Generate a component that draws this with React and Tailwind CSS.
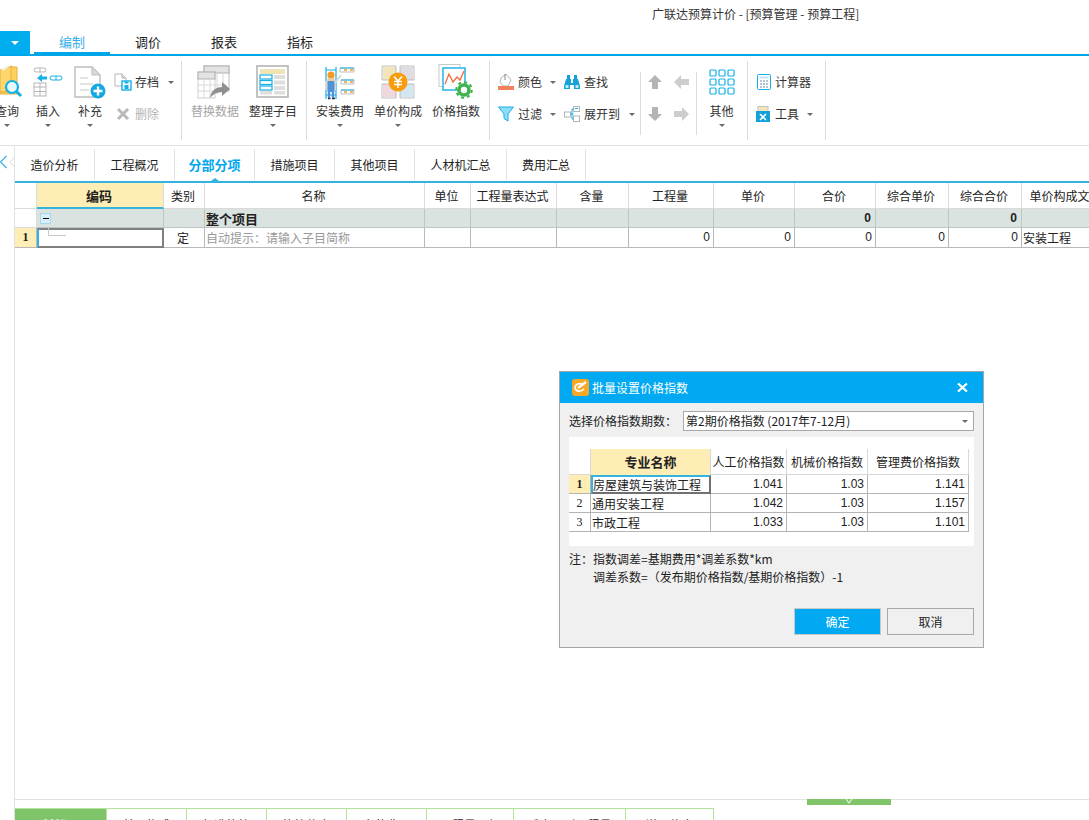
const Caret = ({ className = "" }) => (
  <span className={"inline-block w-0 h-0 border-x-[3px] border-x-transparent border-t-[3px] border-t-[#6b6b6b] " + className} />
);

const QueryIcon = () => (
  <svg width="36" height="36" viewBox="0 0 36 36">
    <path d="M0 6 L12 2 L12 28 L0 28Z" fill="#ffd56e" stroke="#e3b23e" />
    <path d="M11 3 L17 3 L17 30 L0 30 L0 28 L11 28Z" fill="#ffcf5c" stroke="#e3b23e" />
    <path d="M2 6 L10 1" stroke="#f3f3f3" strokeWidth="2" />
    <circle cx="12" cy="23" r="6" fill="#e6f7fd" stroke="#14b0e6" strokeWidth="2.2" />
    <path d="M16.5 27.5 L21 32" stroke="#14b0e6" strokeWidth="3" />
  </svg>
);

const InsertIcon = () => (
  <svg width="36" height="36" viewBox="-3 -2 36 36">
    <rect x="1" y="2" width="12" height="4" rx="2" fill="#fff" stroke="#b5b5b5" />
    <path d="M7 2 V6" stroke="#b5b5b5" />
    <path d="M4 12 L9 8 V10.5 H14 V13.5 H9 V16 L4 12Z" fill="#14b0e6" />
    <rect x="17" y="10" width="12" height="4" rx="2" fill="#fff" stroke="#14b0e6" />
    <path d="M23 10 V14" stroke="#14b0e6" />
    <rect x="1" y="17" width="12" height="13" fill="#fff" stroke="#b5b5b5" />
    <path d="M1 21 H13 M1 25.5 H13 M7 17 V30" stroke="#b5b5b5" />
  </svg>
);

const AddDocIcon = () => (
  <svg width="36" height="36" viewBox="-1 -2 36 36">
    <path d="M2 1 H19 L27 9 V31 H2Z" fill="#fff" stroke="#bdbdbd" strokeWidth="1.4" />
    <path d="M19 1 V9 H27Z" fill="#d9d9d9" stroke="#bdbdbd" />
    <path d="M7 12 H15 M7 18 H20 M7 24 H16" stroke="#e2e2e2" strokeWidth="2" />
    <circle cx="25" cy="25" r="7.5" fill="#14a9e3" />
    <path d="M25 20.5 V29.5 M20.5 25 H29.5" stroke="#fff" strokeWidth="2.4" />
  </svg>
);

const ArchiveIcon = () => (
  <svg width="18" height="18" viewBox="0 0 18 18">
    <path d="M1 1 H8 L12 5 V13 H1Z" fill="#fff" stroke="#b5b5b5" />
    <path d="M8 1 V5 H12" fill="#ddd" stroke="#b5b5b5" />
    <rect x="8" y="8" width="9" height="9" fill="#fff" stroke="#14b0e6" strokeWidth="1.4" />
    <rect x="10.5" y="12" width="4" height="4" fill="#14b0e6" />
    <rect x="10.5" y="8.5" width="4" height="2" fill="#14b0e6" />
  </svg>
);

const DeleteIcon = () => (
  <svg width="14" height="14" viewBox="0 0 14 14">
    <path d="M2 2 L12 12 M12 2 L2 12" stroke="#b9b9b9" strokeWidth="3" />
  </svg>
);

const ReplaceIcon = () => (
  <svg width="36" height="36" viewBox="0 0 36 36">
    <rect x="7" y="2" width="25" height="25" fill="#fff" stroke="#bdbdbd" />
    <rect x="7" y="2" width="25" height="7" fill="#e3e3e3" stroke="#b0b0b0" />
    <rect x="1" y="8" width="17" height="26" fill="#fff" stroke="#cfcfcf" />
    <rect x="1" y="8" width="17" height="7" fill="#e3e3e3" stroke="#b0b0b0" />
    <path d="M1 21 H30 M1 27 H22 M7 15 V34 M13 15 V34 M20 9 V30 M26 9 V24" stroke="#d8d8d8" />
    <path d="M13 34 C14 26 20 23 25 23 V18 L33 25 L25 32 V28 C20 28 16 30 13 34Z" fill="#8f8f8f" />
  </svg>
);

const ArrangeIcon = () => (
  <svg width="36" height="36" viewBox="0 0 36 36">
    <rect x="2" y="2" width="31" height="31" fill="#fff" stroke="#b5b5b5" strokeWidth="1.6" />
    <rect x="5" y="5" width="25" height="5" fill="#f0e3b4" />
    <rect x="5" y="11" width="12" height="4" fill="#fff" stroke="#14b0e6" strokeWidth="1.2" />
    <rect x="5" y="16.5" width="12" height="4" fill="#fff" stroke="#14b0e6" strokeWidth="1.2" />
    <rect x="5" y="22" width="12" height="4" fill="#fff" stroke="#14b0e6" strokeWidth="1.2" />
    <rect x="5" y="27" width="12" height="3.5" fill="#dedede" />
    <path d="M19 11 H30 V15 H19Z M19 16.5 H30 V20.5 H19Z M19 22 H30 V26 H19Z M19 27 H30 V30.5 H19Z" fill="#dedede" />
  </svg>
);

const WorkerIcon = () => (
  <svg width="36" height="36" viewBox="-2 -2 36 36">
    <path d="M2 1 V33 M12 1 V33 M2 4 H12 M2 22 H12 M2 29 H12" stroke="#14b0e6" strokeWidth="1.2" />
    <path d="M16 2 H30 V6 H16Z M17 14 H30 V18 H17Z M17 24 H30 V28 H17Z" fill="#fff" stroke="#bdbdbd" />
    <path d="M16 2 H30 M17 14 H30 M17 24 H30" stroke="#14b0e6" />
    <path d="M20 4 H23 M26 4 H29 M20 16 H23 M26 16 H29 M20 26 H23 M26 26 H29" stroke="#f59b23" strokeWidth="1.3" />
    <circle cx="7" cy="9" r="3.6" fill="#f59b23" />
    <rect x="3.5" y="12" width="7" height="3" fill="#f0c9a0" />
    <rect x="1" y="15" width="11" height="9" fill="#d9d9d9" />
    <rect x="3.5" y="15" width="7" height="11" fill="#4f93d6" />
    <path d="M5 26 V32 M9 26 V32" stroke="#4f93d6" strokeWidth="2.4" />
    <path d="M4 32.5 H6.5 M8 32.5 H11" stroke="#333" strokeWidth="1.4" />
    <path d="M11 17 L17 9" stroke="#d9d9d9" strokeWidth="2" />
  </svg>
);

const UnitPriceIcon = () => (
  <svg width="36" height="36" viewBox="0 0 36 36">
    <rect x="3" y="3" width="13" height="13" fill="#f3e5bb" stroke="none" />
    <rect x="20" y="3" width="13" height="13" fill="#e0dce4" />
    <rect x="3" y="20" width="13" height="13" fill="#f1d8dc" />
    <rect x="20" y="20" width="13" height="13" fill="#d3e6f2" />
    <path d="M2 2 H16 V16 H2Z M20 2 H34 V16 H20Z M2 20 H16 V34 H2Z M20 20 H34 V34 H20Z" fill="none" stroke="#bdbdbd" />
    <circle cx="18" cy="18" r="9.5" fill="#f79d0c" />
    <path d="M14 12.5 L18 17 L22 12.5 M18 17 V24 M14 17.5 H22 M14 20.5 H22" fill="none" stroke="#fff" strokeWidth="1.5" />
  </svg>
);

const PriceIndexIcon = () => (
  <svg width="36" height="36" viewBox="0 0 36 36">
    <rect x="1" y="0.5" width="21" height="22" fill="#fff" stroke="#c9c9c9" />
    <rect x="5" y="4" width="22" height="22" fill="#fff" stroke="#14b0e6" strokeWidth="1.4" />
    <path d="M7 20 L11 10 L15 18 L19 13 L22 16 L26 7" fill="none" stroke="#f2693b" strokeWidth="1.3" />
    <circle cx="26" cy="26" r="5" fill="#fff" stroke="#3fb34f" strokeWidth="3.6" />
    <circle cx="26" cy="26" r="7.8" fill="none" stroke="#3fb34f" strokeWidth="2" strokeDasharray="3 3.1" />
  </svg>
);

const BucketIcon = () => (
  <svg width="16" height="18" viewBox="0 0 16 18">
    <path d="M3 5 L8 1 L13 7 L10 13 H5 L2 9Z" fill="#fff" stroke="#b5b5b5" />
    <path d="M7 1 L7 7" stroke="#888" />
    <rect x="0" y="13" width="16" height="4" fill="#f2825c" />
  </svg>
);

const FunnelIcon = () => (
  <svg width="16" height="16" viewBox="0 0 16 16">
    <path d="M0.5 1 H15.5 L10 8 V15 L6 12.5 V8Z" fill="#8fdcf7" stroke="#14b0e6" />
  </svg>
);

const BinocularIcon = () => (
  <svg width="16" height="16" viewBox="0 0 16 16">
    <path d="M3 1 H6 V5 H3Z M10 1 H13 V5 H10Z" fill="#14a0d8" />
    <path d="M2 5 H7 V9 H9 V5 H14 L16 12 V15 H10 V11 H6 V15 H0 V12Z" fill="#14a0d8" />
    <rect x="1.5" y="11" width="3" height="3" fill="#bfeafa" />
    <rect x="11.5" y="11" width="3" height="3" fill="#bfeafa" />
  </svg>
);

const ExpandIcon = () => (
  <svg width="16" height="16" viewBox="0 0 16 16">
    <rect x="0.5" y="6" width="6" height="5" fill="#fff" stroke="#b5b5b5" />
    <rect x="9.5" y="0.5" width="6" height="5" fill="#fff" stroke="#b5b5b5" />
    <rect x="9.5" y="10" width="6" height="5.5" fill="#fff" stroke="#b5b5b5" />
    <path d="M6.5 8 H9.5 M8 3 V13 M8 3 H9.5 M8 13 H9.5" stroke="#14b0e6" />
    <rect x="11" y="2" width="3" height="1" fill="#14b0e6" />
  </svg>
);

const GridIcon = () => (
  <svg width="26" height="26" viewBox="0 0 26 26">
    {[1, 10, 19].map((y) =>
      [1, 10, 19].map((x) => (
        <rect key={x + "-" + y} x={x} y={y} width="6" height="6" rx="1" fill="#fff" stroke="#14b0e6" strokeWidth="1.2" />
      ))
    )}
  </svg>
);

const CalcIcon = () => (
  <svg width="14" height="16" viewBox="0 0 14 16">
    <rect x="0.5" y="0.5" width="13" height="15" rx="1" fill="#fff" stroke="#14b0e6" />
    <rect x="2.5" y="2.5" width="9" height="2" fill="#bfe7f7" />
    <path d="M3 7 H5 M6 7 H8 M9 7 H11 M3 10 H5 M6 10 H8 M9 10 H11 M3 13 H5 M6 13 H8 M9 13 H11" stroke="#6b8fa3" />
  </svg>
);

const ToolIcon = () => (
  <svg width="16" height="16" viewBox="0 0 16 16">
    <rect x="2" y="0.5" width="10" height="6" fill="#f3e5bb" stroke="#c4c4c4" />
    <rect x="0" y="5" width="14" height="11" fill="#14a0d8" />
    <path d="M4 8 L10 14 M10 8 L4 14" stroke="#fff" strokeWidth="1.6" />
  </svg>
);

const Arrow = ({ dir, color }) => {
  const paths = {
    up: "M7 0 L14 7 H10 V14 H4 V7 H0Z",
    down: "M7 14 L14 7 H10 V0 H4 V7 H0Z",
    left: "M0 7 L7 0 V4 H15 V10 H7 V14Z",
    right: "M15 7 L8 0 V4 H0 V10 H8 V14Z",
  };
  return (
    <svg width="15" height="14" viewBox="0 0 15 14">
      <path d={paths[dir]} fill={color} />
    </svg>
  );
};

const BigBtn = ({ w, label, icon, caret, gray }) => (
  <div className={"flex flex-col items-center shrink-0 pt-[8px] " + w}>
    <div className="h-[36px] flex items-start justify-center">{icon}</div>
    <div className={"mt-[1px] h-[20px] leading-[20px] whitespace-nowrap " + (gray ? "text-[#a5a5a5]" : "text-[#333]")}>{label}</div>
    {caret && <Caret className="mt-[3px]" />}
  </div>
);

const SmallBtn = ({ icon, label, caret, gray, gap = "gap-[3px]", caretGap = "ml-[5px]" }) => (
  <div className={"flex items-center h-[20px] whitespace-nowrap " + gap}>
    <div className="w-[18px] flex justify-center">{icon}</div>
    <span className={gray ? "text-[#b3b3b3]" : "text-[#333]"}>{label}</span>
    {caret && <Caret className={caretGap} />}
  </div>
);

const Sep = () => <div className="w-px h-[79px] mt-[5px] bg-[#dcdcdc] shrink-0" />;
const ShortSep = () => <div className="w-px h-[63px] mt-[16px] bg-[#dcdcdc] shrink-0" />;

const SmallCol = ({ w, children }) => (
  <div className={"flex flex-col gap-[12px] pt-[16px] shrink-0 " + w}>{children}</div>
);

const Toolbar = () => (
  <div className="flex h-[90px] border-b border-[#e2e2e2] text-[12px]">
    <div className="-ml-[16px]"><BigBtn w="w-[46px]" label="查询" caret icon={<div className="pl-[22px]"><QueryIcon /></div>} /></div>
    <BigBtn w="w-[36px]" label="插入" caret icon={<InsertIcon />} />
    <BigBtn w="w-[48px]" label="补充" caret icon={<AddDocIcon />} />
    <SmallCol w="w-[67px]">
      <SmallBtn icon={<ArchiveIcon />} label="存档" caret caretGap="ml-[6px]" />
      <SmallBtn icon={<DeleteIcon />} label="删除" gray />
    </SmallCol>
    <Sep />
    <BigBtn w="w-[66px]" label="替换数据" gray icon={<ReplaceIcon />} />
    <BigBtn w="w-[50px]" label="整理子目" caret icon={<ArrangeIcon />} />
    <div className="w-[8px] shrink-0" />
    <Sep />
    <BigBtn w="w-[66px]" label="安装费用" caret icon={<WorkerIcon />} />
    <BigBtn w="w-[50px]" label="单价构成" caret icon={<UnitPriceIcon />} />
    <BigBtn w="w-[66px]" label="价格指数" icon={<PriceIndexIcon />} />
    <Sep />
    <div className="w-[7px] shrink-0" />
    <SmallCol w="w-[66px]">
      <SmallBtn icon={<BucketIcon />} label="颜色" caret />
      <SmallBtn icon={<FunnelIcon />} label="过滤" caret />
    </SmallCol>
    <SmallCol w="w-[77px]">
      <SmallBtn icon={<BinocularIcon />} label="查找" />
      <SmallBtn icon={<ExpandIcon />} label="展开到" caret caretGap="ml-[6px]" />
    </SmallCol>
    <ShortSep />
    <div className="w-[55px] shrink-0 pt-[19px] pl-[7px] grid grid-cols-[26px_15px] gap-y-[18px] h-fit">
      <Arrow dir="up" color="#b4b4b4" />
      <Arrow dir="left" color="#cdcdcd" />
      <Arrow dir="down" color="#b4b4b4" />
      <Arrow dir="right" color="#cdcdcd" />
    </div>
    <ShortSep />
    <BigBtn w="w-[49px]" label="其他" caret icon={<div className="pt-[5px]"><GridIcon /></div>} />
    <div className="w-px shrink-0" />
    <Sep />
    <div className="w-[7px] shrink-0" />
    <SmallCol w="w-[70px]">
      <SmallBtn icon={<CalcIcon />} label="计算器" gap="gap-[2px]" />
      <SmallBtn icon={<ToolIcon />} label="工具" caret gap="gap-[2px]" caretGap="ml-[6px]" />
    </SmallCol>
    <Sep />
  </div>
);

const mainCols = ["", "编码", "类别", "名称", "单位", "工程量表达式", "含量", "工程量", "单价", "合价", "综合单价", "综合合价", "单价构成文件"];
const topRow = ["", "", "", "整个项目", "", "", "", "", "", "0", "", "0", ""];
const subRow = ["1", "", "定", "自动提示：请输入子目简称", "", "", "", "0", "0", "0", "0", "0", "安装工程"];
const numCols = [7, 8, 9, 10, 11];

const MainTable = () => (
  <div className="overflow-hidden text-[12px] text-[#222]">
    <div className="grid grid-cols-[22px_127px_41px_220px_46px_86px_72px_85px_81px_81px_73px_73px_90px] w-[1097px]">
      {mainCols.map((c, i) => (
        <div
          key={i}
          className={
            "h-[26px] leading-[25px] text-center pr-[2px] whitespace-nowrap overflow-hidden border-r border-[#dadada] " +
            (i === 1 ? "bg-[#feedb5] font-bold text-[13px] border-b-2 border-b-[#35b3df]" : "border-b border-b-[#dadada]")
          }
        >
          {c}
        </div>
      ))}
      {topRow.map((c, i) => (
        <div
          key={i}
          className={
            "h-[19px] leading-[19px] font-bold relative border-r border-b " +
            (i === 0 ? "bg-white border-[#dadada] " : "bg-[#dae3df] border-[#bdc7c2] ") +
            (numCols.includes(i) ? "text-right pr-[4px] font-['Liberation_Sans',sans-serif]" : "pl-[1px] text-[13px]")
          }
        >
          {c}
          {i === 1 && (
            <span className="absolute left-[3px] top-[4px] w-[11px] h-[11px] bg-[#d7eef8] border border-[#a9d8ea] flex items-center justify-center">
              <span className="w-[6px] h-px bg-black" />
            </span>
          )}
        </div>
      ))}
      {subRow.map((c, i) => (
        <div
          key={i}
          className={
            "h-[20px] leading-[19px] whitespace-nowrap relative " +
            (i === 1 ? "border-2 border-[#808080] border-l-[#35b3df] " : "border-r border-b border-[#b8b8b8] ") +
            (i === 0 ? "bg-[#feedb5] text-center font-bold font-['Liberation_Serif',serif] " : "") +
            (i === 2 ? "text-center pr-[2px] " : "") +
            (i === 3 ? "text-[#999] pl-[1px] " : "") +
            (numCols.includes(i) ? "text-right pr-[3px] font-['Liberation_Sans',sans-serif] " : "") +
            (i === 12 ? "pl-[1px] " : "")
          }
        >
          {c}
          {i === 1 && <span className="absolute left-[9px] top-[-3px] w-[18px] h-[9px] border-l border-b border-[#c8c8c8]" />}
        </div>
      ))}
    </div>
  </div>
);

const priceRows = [
  ["1", "房屋建筑与装饰工程", "1.041", "1.03", "1.141"],
  ["2", "通用安装工程", "1.042", "1.03", "1.157"],
  ["3", "市政工程", "1.033", "1.03", "1.101"],
];

const Dialog = () => (
  <div className="absolute left-[559px] top-[371px] w-[425px] h-[277px] bg-[#f0f0f0] border border-[#a6a6a6] text-[12px] text-[#222] flex flex-col">
    <div className="h-[31px] shrink-0 bg-[#00a9f1] text-white text-[12px] flex items-center pl-[12px] pr-[15px]">
      <svg width="17" height="17" viewBox="0 0 17 17" className="mr-[3px]">
        <rect width="17" height="17" rx="3" fill="#f9a825" />
        <path d="M3 9 C3 5 7 4 10 5 M3 9 C4 13 9 13 12 10" fill="none" stroke="#fff" strokeWidth="1.6" />
        <path d="M6 9 L14 3" stroke="#fff" strokeWidth="2.2" />
      </svg>
      <span>批量设置价格指数</span>
      <svg width="11" height="9" viewBox="0 0 11 9" className="ml-auto">
        <path d="M1 0.5 L10 8.5 M10 0.5 L1 8.5" stroke="#fff" strokeWidth="2.2" />
      </svg>
    </div>
    <div className="flex items-center h-[20px] mt-[8px] mx-[9px]">
      <span className="w-[114px] shrink-0 whitespace-nowrap">选择价格指数期数：</span>
      <div className="flex-1 h-[20px] bg-white border border-[#a8a8a8] flex items-center pl-[2px] pr-[5px]">
        <span>第2期价格指数 (2017年7-12月)</span>
        <Caret className="ml-auto" />
      </div>
    </div>
    <div className="h-[109px] mx-[9px] mt-[6px] bg-white pt-[12px]">
      <div className="grid grid-cols-[22px_120px_76px_81px_101px] w-[400px]">
        <div className="h-[26px] border-r border-b border-[#d8d8d8]" />
        <div className="h-[26px] leading-[26px] text-center bg-[#feedb5] font-bold text-[13px] border-r border-[#d8d8d8]">专业名称</div>
        {["人工价格指数", "机械价格指数", "管理费价格指数"].map((h) => (
          <div key={h} className="h-[26px] leading-[26px] text-center whitespace-nowrap border-r border-b border-[#d8d8d8]">{h}</div>
        ))}
        {priceRows.map((r, i) =>
          r.map((c, j) => (
            <div
              key={i + "-" + j}
              className={
                "h-[19px] whitespace-nowrap " +
                (j === 1 && i === 0
                  ? "border-2 border-[#707070] border-l-[#35b3df] border-t-[#35b3df] leading-[16px] "
                  : "border-r border-b border-[#b4b4b4] leading-[19px] ") +
                (j === 0 ? "text-center font-['Liberation_Serif',serif] " : "") +
                (j === 0 && i === 0 ? "bg-[#feedb5] font-bold " : "") +
                (j === 1 && i !== 0 ? "pl-[1px] " : "") +
                (j > 1 ? "text-right pr-[3px] font-['Liberation_Sans',sans-serif] " : "")
              }
            >
              {c}
            </div>
          ))
        )}
      </div>
    </div>
    <div className="mx-[9px] mt-[4px] leading-[18px]">
      <div className="flex">
        <span className="w-[24px] shrink-0">注：</span>
        <span>指数调差=基期费用*调差系数*km</span>
      </div>
      <div className="pl-[24px]">调差系数=（发布期价格指数/基期价格指数）-1</div>
    </div>
    <div className="flex justify-end gap-[6px] mx-[9px] mt-auto mb-[12px]">
      <div className="w-[87px] h-[27px] leading-[25px] text-center bg-[#00a9f1] border border-[#c8c8c8] text-white">确定</div>
      <div className="w-[87px] h-[27px] leading-[25px] text-center border border-[#a8a8a8]">取消</div>
    </div>
  </div>
);

const sheetTabs = ["造价分析", "工程概况", "分部分项", "措施项目", "其他项目", "人材机汇总", "费用汇总"];
const sheetWidths = ["w-[80px]", "w-[80px]", "w-[80px]", "w-[80px]", "w-[80px]", "w-[92px]", "w-[79px]"];
const bottomTabs = [
  ["工料机显示", "w-[92px]"],
  ["单价构成", "w-[80px]"],
  ["标准换算", "w-[80px]"],
  ["换算信息", "w-[80px]"],
  ["安装费用", "w-[80px]"],
  ["工程量明细", "w-[87px]"],
  ["反查图形工程量", "w-[112px]"],
  ["说明信息", "w-[88px]"],
];

const App = () => (
  <div className="relative w-[1089px] h-[820px] overflow-hidden bg-white flex flex-col font-['Noto_Sans_CJK_SC',sans-serif] text-[#222]">
    <div className="h-[31px] shrink-0 pl-[652px] pt-[5px] text-[12px] leading-[18px] text-[#333] whitespace-nowrap">
      广联达预算计价 - [预算管理 - 预算工程]
    </div>
    <div className="h-[25px] shrink-0 flex border-b-2 border-[#00a7e8] text-[13px]">
      <div className="w-[30px] h-[23px] bg-[#00aef0] flex items-center justify-center mr-[4px]">
        <span className="w-0 h-0 border-x-[4px] border-x-transparent border-t-[4px] border-t-white" />
      </div>
      {["编制", "调价", "报表", "指标"].map((t, i) => (
        <div
          key={t}
          className={"w-[76px] h-[23px] leading-[21px] text-center " + (i === 0 ? "text-[#37aee6] border-b-2 border-[#00a7e8]" : "text-[#222]")}
        >
          {t}
        </div>
      ))}
    </div>
    <Toolbar />
    <div className="flex flex-1 min-h-0">
      <div className="w-[15px] shrink-0 relative border-r border-[#e2e2e2]">
        <svg width="14" height="14" viewBox="0 0 14 14" className="absolute left-0 top-[9px]">
          <path d="M6.5 1 L0.5 7 L6.5 13" fill="none" stroke="#35b3df" strokeWidth="1.2" />
          <path d="M14 3 L9.5 7 L14 11" fill="none" stroke="#dcdcdc" strokeWidth="1" />
        </svg>
      </div>
      <div className="flex-1 min-w-0 flex flex-col">
        <div className="h-[37px] shrink-0 flex items-end border-b-2 border-[#35b3df] text-[12px] relative">
          {sheetTabs.map((t, i) => (
            <div
              key={t}
              className={
                sheetWidths[i] + " h-[31px] mb-[1px] leading-[31px] text-center border-r border-[#e2e2e2] relative " +
                (i === 2 ? "text-[#00a7ee] font-bold text-[13px]" : "text-[#222]")
              }
            >
              {t}
              {i === 2 && (
                <span className="absolute left-1/2 -translate-x-1/2 bottom-[-1px] w-0 h-0 border-x-[4px] border-x-transparent border-b-[3px] border-b-[#35b3df]" />
              )}
            </div>
          ))}
        </div>
        <MainTable />
        <div className="flex-1" />
        <div className="h-[21px] shrink-0 border-t border-[#e2e2e2] relative">
          <div className="absolute left-[792px] top-[-1px] w-[84px] h-[6px] bg-[#7fc468] flex justify-center">
            <svg width="8" height="6" viewBox="0 0 8 6"><path d="M1 0 L4 4 L7 0" fill="none" stroke="#d6eccd" strokeWidth="1.3" /></svg>
          </div>
          <div className="flex mt-[8px] border-t border-[#b3e49b] w-fit text-[12px] h-[36px]">
            {bottomTabs.map(([t, w], i) => (
              <div
                key={t}
                className={w + " h-[36px] leading-[32px] text-center border-r border-[#b3e49b] whitespace-nowrap " + (i === 0 ? "bg-[#7fc468] text-white font-bold" : "text-[#222]")}
              >
                {t}
              </div>
            ))}
          </div>
        </div>
      </div>
    </div>
    <Dialog />
  </div>
);

export default App;
